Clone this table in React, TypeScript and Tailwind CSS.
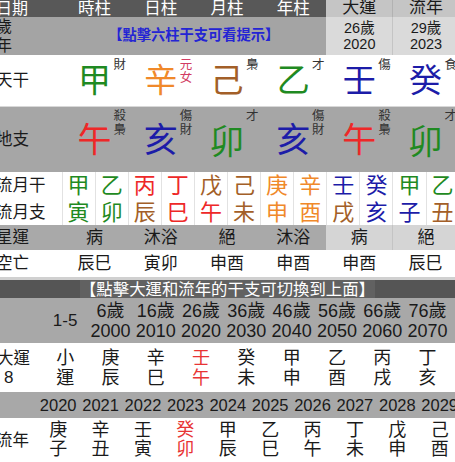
import React from "react";

type El = "wood" | "fire" | "earth" | "metal" | "water";
const COL: Record<El, string> = {
  wood: "text-[#1f8a22]",
  fire: "text-[#ee2828]",
  earth: "text-[#a35f28]",
  metal: "text-[#f0892a]",
  water: "text-[#1c1ca8]",
};
const EL: Record<string, El> = {
  甲: "wood", 乙: "wood", 寅: "wood", 卯: "wood",
  丙: "fire", 丁: "fire", 巳: "fire", 午: "fire",
  戊: "earth", 己: "earth", 辰: "earth", 戌: "earth", 丑: "earth", 未: "earth",
  庚: "metal", 辛: "metal", 申: "metal", 酉: "metal",
  壬: "water", 癸: "water", 亥: "water", 子: "water",
};
const c = (ch: string) => COL[EL[ch]];

const stems: { ch: string; sup: string[]; red?: boolean }[] = [
  { ch: "甲", sup: ["財"] },
  { ch: "辛", sup: ["元", "女"], red: true },
  { ch: "己", sup: ["梟"] },
  { ch: "乙", sup: ["才"] },
  { ch: "壬", sup: ["傷"] },
  { ch: "癸", sup: ["食"] },
];
const branches: { ch: string; sup: string[] }[] = [
  { ch: "午", sup: ["殺", "梟"] },
  { ch: "亥", sup: ["傷", "財"] },
  { ch: "卯", sup: ["才"] },
  { ch: "亥", sup: ["傷", "財"] },
  { ch: "午", sup: ["殺", "梟"] },
  { ch: "卯", sup: ["才"] },
];
const months = [
  ["甲", "寅"], ["乙", "卯"], ["丙", "辰"], ["丁", "巳"], ["戊", "午"], ["己", "未"],
  ["庚", "申"], ["辛", "酉"], ["壬", "戌"], ["癸", "亥"], ["甲", "子"], ["乙", "丑"],
];
const ages = [
  ["6歲", "2000"], ["16歲", "2010"], ["26歲", "2020"], ["36歲", "2030"], ["46歲", "2040"],
  ["56歲", "2050"], ["66歲", "2060"], ["76歲", "2070"],
];
const dayun = [
  ["小", "運"], ["庚", "辰"], ["辛", "巳"], ["壬", "午"], ["癸", "未"],
  ["甲", "申"], ["乙", "酉"], ["丙", "戌"], ["丁", "亥"],
];
const years = ["2020", "2021", "2022", "2023", "2024", "2025", "2026", "2027", "2028", "2029"];
const liunian = [
  ["庚", "子"], ["辛", "丑"], ["壬", "寅"], ["癸", "卯"], ["甲", "辰"],
  ["乙", "巳"], ["丙", "午"], ["丁", "未"], ["戊", "申"], ["己", "酉"],
];

export default function App() {
  return (
    <div className="w-[455px] h-[462px] overflow-hidden bg-white text-[#1a1a1a] font-['Liberation_Sans','Noto_Sans_CJK_TC',sans-serif]">
      <div className="ml-[-4px] w-[470px]">
        {/* upper table */}
        <div className="grid grid-cols-[65.5px_repeat(12,33.1px)]">
          {/* header */}
          <div className="h-[17px] bg-[#585858] text-white text-[16px] leading-[17px]">日期</div>
          {["時柱", "日柱", "月柱", "年柱"].map((t) => (
            <div key={t} className="col-span-2 h-[17px] bg-[#585858] text-white text-[16.5px] leading-[17px] text-center">
              {t}
            </div>
          ))}
          <div className="col-span-2 h-[17px] bg-[#c5c5c5] text-[17px] leading-[16px] text-center">大運</div>
          <div className="col-span-2 h-[17px] bg-[#c5c5c5] border-l border-[#b2b2b2] text-[17px] leading-[16px] text-center">流年</div>

          {/* 歲年 row */}
          <div className="h-[38px] bg-[#a4a4a4] text-[16px] leading-[19px] flex flex-col">
            <span>歲</span>
            <span>年</span>
          </div>
          <div className="col-span-8 h-[38px] bg-[#a4a4a4] flex items-center justify-center text-[14.25px] font-bold text-[#2424d4]">
            【點擊六柱干支可看提示】
          </div>
          <div className="col-span-2 h-[38px] bg-[#dadada] flex flex-col items-center justify-center text-[14.5px] leading-[16px]">
            <span>26歲</span>
            <span>2020</span>
          </div>
          <div className="col-span-2 h-[38px] bg-[#dadada] border-l border-[#c4c4c4] flex flex-col items-center justify-center text-[14.5px] leading-[16px]">
            <span>29歲</span>
            <span>2023</span>
          </div>

          {/* 天干 */}
          <div className="h-[52px] flex items-center text-[16.5px] border-b border-[#d8d8d8]">天干</div>
          {stems.map((s, i) => (
            <div key={i} className="col-span-2 h-[52px] relative flex items-center justify-center border-b border-[#d8d8d8]">
              <span className={`text-[33px] leading-none ${c(s.ch)}`}>{s.ch}</span>
              <span
                className={`absolute left-[52px] top-[4px] flex flex-col text-[12.5px] leading-[13px] ${
                  s.red ? "text-[#d23c64]" : "text-[#333]"
                }`}
              >
                {s.sup.map((x, j) => (
                  <span key={j}>{x}</span>
                ))}
              </span>
            </div>
          ))}

          {/* 地支 */}
          <div className="h-[65px] bg-[#a6a6a6] flex items-center text-[16.5px]">地支</div>
          {branches.map((s, i) => (
            <div key={i} className="col-span-2 h-[65px] bg-[#a6a6a6] relative flex items-center justify-center">
              <span
                lang={s.ch === "卯" ? "ja" : undefined}
                className={`text-[34px] leading-none ${c(s.ch)} ${
                  s.ch === "卯" ? "font-['Noto_Sans_CJK_JP',sans-serif]" : ""
                }`}
              >
                {s.ch}
              </span>
              <span className="absolute left-[52px] top-[2px] flex flex-col text-[12.5px] leading-[14px] text-[#333]">
                {s.sup.map((x, j) => (
                  <span key={j}>{x}</span>
                ))}
              </span>
            </div>
          ))}

          {/* 流月 */}
          <div className="h-[53px] flex flex-col text-[16.5px] leading-[27px]">
            <span>流月干</span>
            <span>流月支</span>
          </div>
          {months.map(([a, b], i) => (
            <div key={i} className="h-[53px] flex flex-col items-center text-[22px] leading-[27px] border-l border-[#e2e2e2]">
              <span className={c(a)}>{a}</span>
              <span className={c(b)}>{b}</span>
            </div>
          ))}

          {/* 星運 */}
          <div className="h-[25px] bg-[#a9a9a9] flex items-center text-[16.5px]">星運</div>
          {["病", "沐浴", "絕", "沐浴"].map((t, i) => (
            <div key={i} className="col-span-2 h-[25px] bg-[#a9a9a9] flex items-center justify-center text-[17px]">
              {t}
            </div>
          ))}
          <div className="col-span-2 h-[25px] bg-[#d5d5d5] flex items-center justify-center text-[17px]">病</div>
          <div className="col-span-2 h-[25px] bg-[#d5d5d5] border-l border-[#c4c4c4] flex items-center justify-center text-[17px]">絕</div>

          {/* 空亡 */}
          <div className="h-[27px] flex items-center text-[16.5px]">空亡</div>
          {["辰巳", "寅卯", "申酉", "申酉", "申酉", "辰巳"].map((t, i) => (
            <div key={i} className="col-span-2 h-[27px] flex items-center justify-center text-[17px]">
              {t}
            </div>
          ))}
        </div>

        <div className="h-[3px] bg-[#d0d0d0]" />

        {/* lower bar */}
        <div className="h-[18px] w-[463px] bg-[#555555] flex items-center justify-center">
          <span className="text-white text-[16.4px] leading-[18px] bg-[#616161]">【點擊大運和流年的干支可切換到上面】</span>
        </div>

        {/* ages */}
        <div className="flex h-[45px] bg-[#a8a8a8]">
          <div className="w-[46.5px] shrink-0" />
          <div className="w-[45.3px] shrink-0 flex items-center justify-center text-[17px]">1-5</div>
          {ages.map(([a, y]) => (
            <div key={y} className="w-[45.3px] shrink-0 flex flex-col items-center justify-center text-[18px] leading-[20px]">
              <span>{a}</span>
              <span>{y}</span>
            </div>
          ))}
        </div>

        {/* 大運 */}
        <div className="flex h-[49px]">
          <div className="w-[46.5px] shrink-0 flex flex-col justify-center text-[16.5px] leading-[20px]">
            <span className="pl-[1px]">大運</span>
            <span className="pl-[8px] text-[17px]">8</span>
          </div>
          {dayun.map(([a, b], i) => (
            <div
              key={i}
              className={`w-[45.3px] shrink-0 flex flex-col items-center justify-center text-[18px] leading-[20px] ${
                i === 3 ? "text-[#e83434]" : ""
              }`}
            >
              <span>{a}</span>
              <span>{b}</span>
            </div>
          ))}
        </div>

        {/* years */}
        <div className="flex h-[26px] bg-[#a8a8a8]">
          <div className="w-[41px] shrink-0" />
          {years.map((y) => (
            <div key={y} className="w-[42.4px] shrink-0 flex items-center justify-center text-[16.5px]">
              {y}
            </div>
          ))}
        </div>

        {/* 流年 */}
        <div className="flex h-[44px]">
          <div className="w-[41px] shrink-0 flex items-center text-[16.5px]">流年</div>
          {liunian.map(([a, b], i) => (
            <div
              key={i}
              className={`w-[42.4px] shrink-0 flex flex-col items-center justify-center text-[18px] leading-[19px] ${
                i === 3 ? "text-[#e83434]" : ""
              }`}
            >
              <span>{a}</span>
              <span>{b}</span>
            </div>
          ))}
        </div>
      </div>
    </div>
  );
}
